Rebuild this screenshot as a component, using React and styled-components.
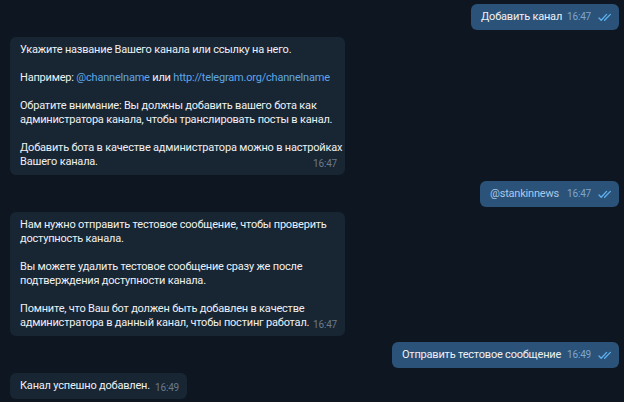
import React from "react";
import styled, { createGlobalStyle } from "styled-components";

const GlobalStyle = createGlobalStyle`
  html, body {
    margin: 0;
    padding: 0;
    background: #0e1621;
  }
  body {
    width: 624px;
    height: 402px;
    overflow: hidden;
    font-family: Roboto, "Open Sans", "Noto Sans", sans-serif;
    -webkit-font-smoothing: antialiased;
  }
`;

const Chat = styled.div`
  display: flex;
  flex-direction: column;
  padding: 4px 5px 0 10px;
`;

const Row = styled.div`
  display: flex;
  justify-content: ${(p) => (p.$out ? "flex-end" : "flex-start")};
  margin-top: ${(p) => p.$gap || 0}px;
`;

const Bubble = styled.div`
  box-sizing: border-box;
  width: ${(p) => p.$w}px;
  background: ${(p) => (p.$out ? "#2b5278" : "#182533")};
  border-radius: 6px;
  padding: 6px ${(p) => (p.$out ? 7 : 8)}px 6px 10px;
  display: flex;
  align-items: flex-end;
  color: #eef1f4;
  font-size: 11px;
  line-height: 14px;
`;

const Body = styled.div`
  flex: 1;
  min-width: 0;
  white-space: nowrap;
  letter-spacing: -0.2px;
`;

const Para = styled.p`
  margin: 0 0 14px;
  &:last-child {
    margin-bottom: 0;
  }
`;

const Link = styled.span`
  color: ${(p) => (p.$soft ? "#a9c9ea" : "#5fa6e6")};
`;

const Meta = styled.div`
  display: flex;
  align-items: center;
  gap: 7px;
  flex-shrink: 0;
  padding-left: 8px;
  font-size: 10px;
  letter-spacing: -0.2px;
  color: ${(p) => (p.$out ? "#7ea6cc" : "#6a7b8c")};
  transform: translateY(${(p) => (p.$out ? 0 : 2)}px);
`;

const Checks = () => (
  <svg width="14" height="9" viewBox="0 0 14 9" fill="none">
    <path
      d="M1 5 L3.2 7.2 L8.6 1.4"
      stroke="#5eb1f0"
      strokeWidth="1.3"
      strokeLinecap="round"
      strokeLinejoin="round"
    />
    <path
      d="M6.6 7.2 L12.4 1.4"
      stroke="#5eb1f0"
      strokeWidth="1.3"
      strokeLinecap="round"
      strokeLinejoin="round"
    />
  </svg>
);

const Out = ({ w, gap, time, children }) => (
  <Row $out $gap={gap}>
    <Bubble $out $w={w}>
      <Body>{children}</Body>
      <Meta $out>
        <span>{time}</span>
        <Checks />
      </Meta>
    </Bubble>
  </Row>
);

const In = ({ w, gap, time, children }) => (
  <Row $gap={gap}>
    <Bubble $w={w}>
      <Body>{children}</Body>
      <Meta>
        <span>{time}</span>
      </Meta>
    </Bubble>
  </Row>
);

export default function App() {
  return (
    <>
      <GlobalStyle />
      <Chat>
        <Out w={148} time="16:47">
          Добавить канал
        </Out>
        <In w={335} gap={7} time="16:47">
          <Para>Укажите название Вашего канала или ссылку на него.</Para>
          <Para>
            Например: <Link>@channelname</Link> или{" "}
            <Link>http://telegram.org/channelname</Link>
          </Para>
          <Para>
            Обратите внимание: Вы должны добавить вашего бота как
            <br />
            администратора канала, чтобы транслировать посты в канал.
          </Para>
          <Para>
            Добавить бота в качестве администратора можно в настройках
            <br />
            Вашего канала.
          </Para>
        </In>
        <Out w={139} gap={6} time="16:47">
          <Link $soft>@stankinnews</Link>
        </Out>
        <In w={335} gap={5} time="16:47">
          <Para>
            Нам нужно отправить тестовое сообщение, чтобы проверить
            <br />
            доступность канала.
          </Para>
          <Para>
            Вы можете удалить тестовое сообщение сразу же после
            <br />
            подтверждения доступности канала.
          </Para>
          <Para>
            Помните, что Ваш бот должен быть добавлен в качестве
            <br />
            администратора в данный канал, чтобы постинг работал.
          </Para>
        </In>
        <Out w={227} gap={6} time="16:49">
          Отправить тестовое сообщение
        </Out>
        <In w={177} gap={5} time="16:49">
          Канал успешно добавлен.
        </In>
      </Chat>
    </>
  );
}
